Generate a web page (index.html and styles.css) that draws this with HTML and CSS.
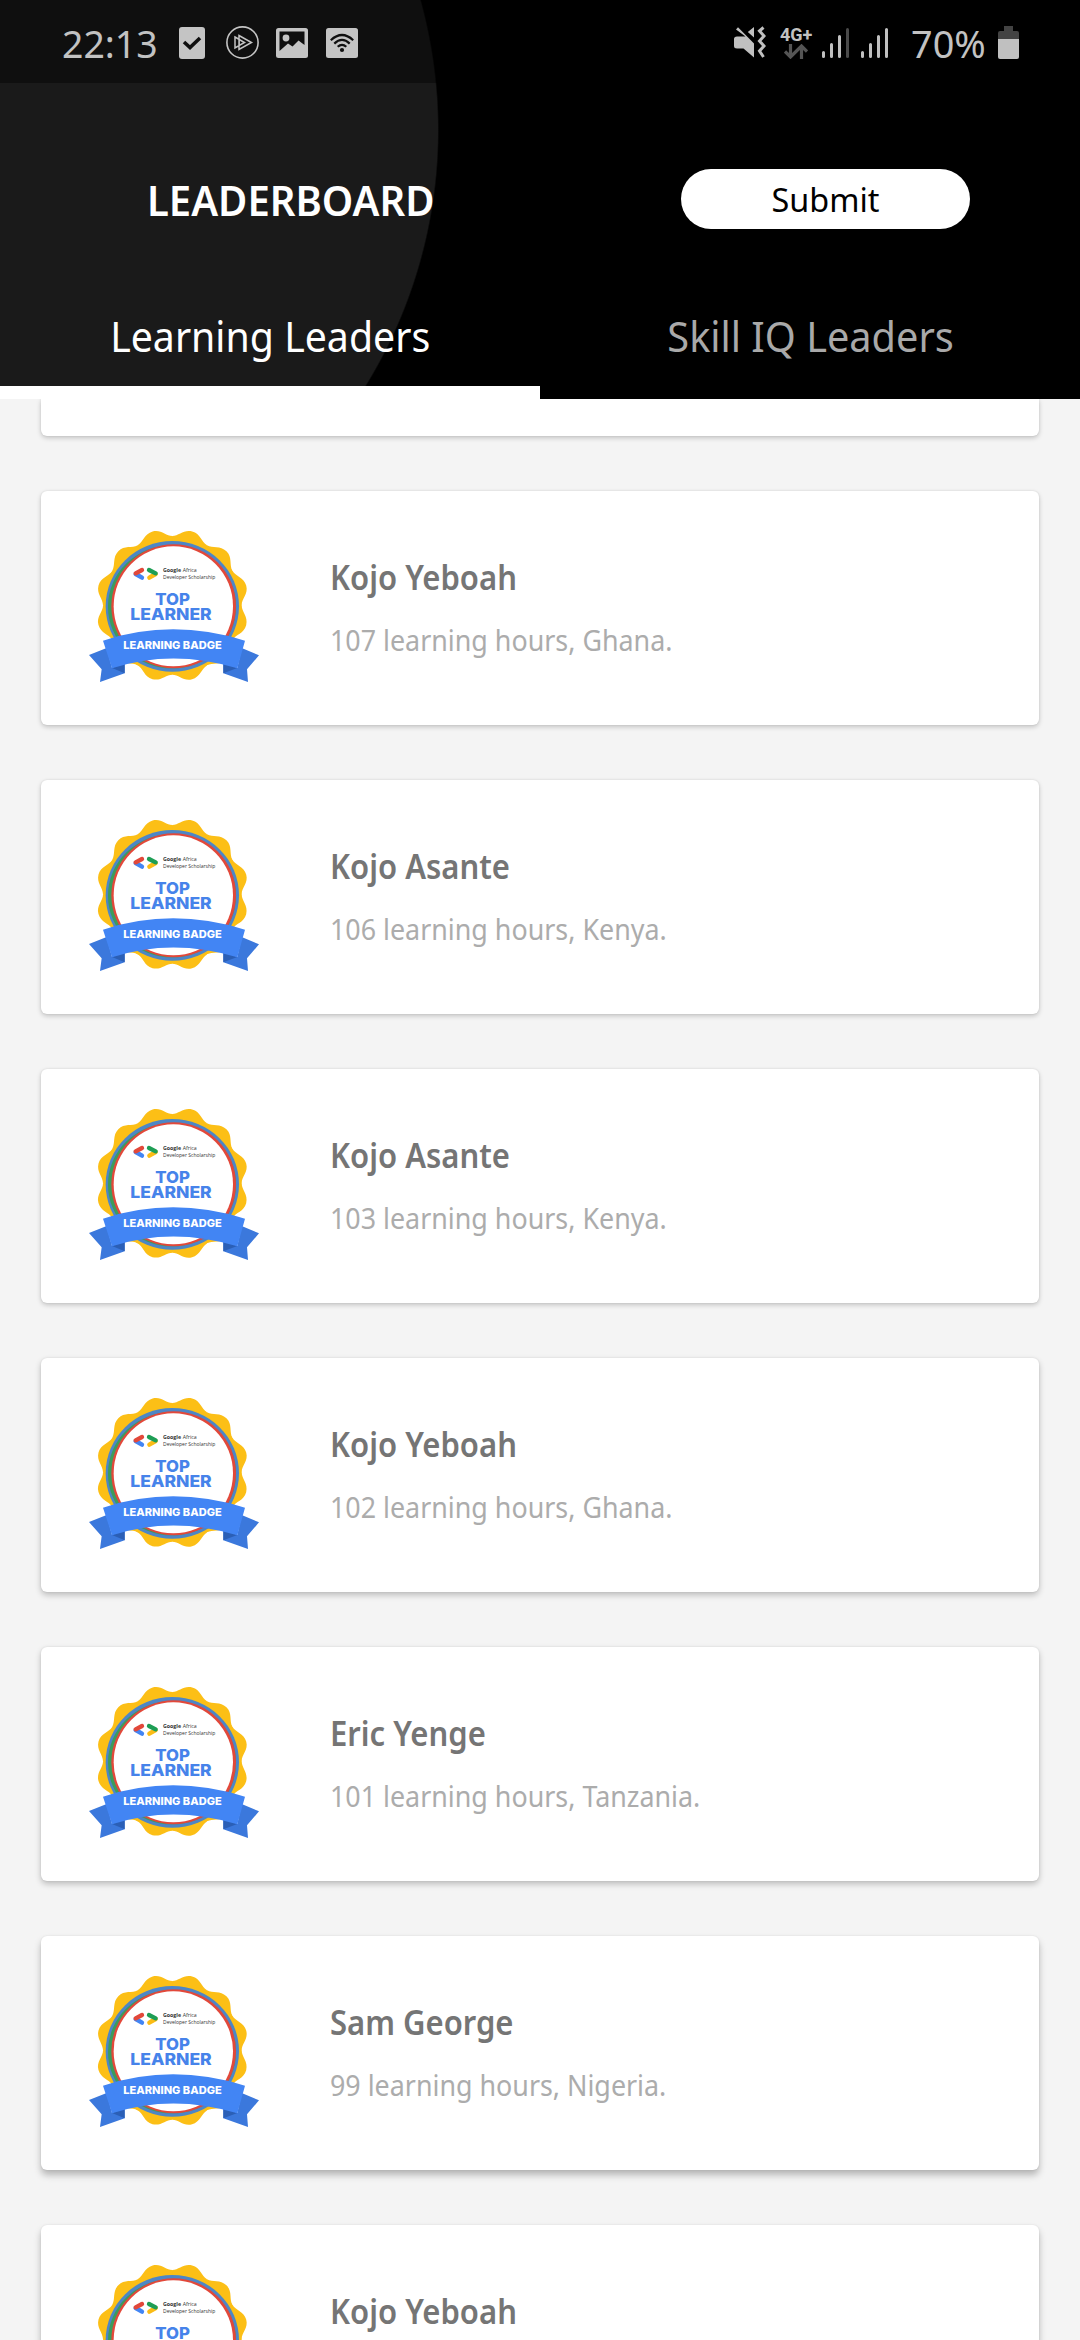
FILE: index.html
```html
<!DOCTYPE html>
<html lang="en">
<head>
<meta charset="utf-8">
<title>Leaderboard</title>
<link rel="stylesheet" href="styles.css">
</head>
<body>
<svg class="defs" aria-hidden="true">
  <defs>
    <path id="scallop" d="M0 0V-208C20 -208 34 -228 59.5 -221.5C85 -215 86.7 -190 104 -180Z"/>
    <symbol id="badge" viewBox="0 0 630 570">
      <g transform="translate(307 286)" fill="#fcbf16">
        <circle r="207"/>
        <use href="#scallop"/>
        <use href="#scallop" transform="rotate(30)"/>
        <use href="#scallop" transform="rotate(60)"/>
        <use href="#scallop" transform="rotate(90)"/>
        <use href="#scallop" transform="rotate(120)"/>
        <use href="#scallop" transform="rotate(150)"/>
        <use href="#scallop" transform="rotate(180)"/>
        <use href="#scallop" transform="rotate(210)"/>
        <use href="#scallop" transform="rotate(240)"/>
        <use href="#scallop" transform="rotate(270)"/>
        <use href="#scallop" transform="rotate(300)"/>
        <use href="#scallop" transform="rotate(330)"/>
      </g>
      <ellipse cx="307" cy="289" rx="200" ry="196" fill="#4d86c6"/>
      <ellipse cx="306" cy="290" rx="192" ry="185" fill="#3c9c5c"/>
      <ellipse cx="311" cy="289" rx="187" ry="186" fill="#e2483a"/>
      <ellipse cx="310" cy="289" rx="179" ry="180" fill="#fff"/>
      <g fill="none" stroke-width="13" stroke-linecap="round">
        <path d="M197 192L216 203" stroke="#4285f4"/>
        <path d="M197 190L216 180" stroke="#e2483a"/>
        <path d="M257 192L238 203" stroke="#fbbc15"/>
        <path d="M237 180L257 190" stroke="#1e9e55"/>
      </g>
      <g class="badge-small">
        <text x="279" y="187" font-weight="700" textLength="54" lengthAdjust="spacingAndGlyphs">Google</text>
        <text x="338" y="187" textLength="42" lengthAdjust="spacingAndGlyphs">Africa</text>
        <text x="279" y="207" textLength="157" lengthAdjust="spacingAndGlyphs">Developer Scholarship</text>
      </g>
      <g class="badge-title">
        <text x="256" y="286" textLength="104" lengthAdjust="spacingAndGlyphs">TOP</text>
        <text x="181" y="330" textLength="244" lengthAdjust="spacingAndGlyphs">LEARNER</text>
      </g>
      <path d="M57 435L110 414L126 474L164 458V490L90 516L95 478Z" fill="#3b78dc"/>
      <path d="M567 436L515 414L502 474L460 458V490L534 516L531 478Z" fill="#3b78dc"/>
      <path d="M126 474L164 457V490ZM502 474L460 457V490Z" fill="#2b5fb6"/>
      <path d="M99 392Q307 324 525 392L502 475Q307 416 126 475Z" fill="#4285f4"/>
      <text class="badge-ribbon" x="160" y="418" textLength="295" lengthAdjust="spacingAndGlyphs">LEARNING BADGE</text>
    </symbol>
  </defs>
</svg>

<header class="header">
  <div class="status">
    <span class="clock"><span class="clock-text">22:13</span></span>
    <svg class="ic-check" width="26" height="32" viewBox="0 0 26 32"><rect width="26" height="32" rx="3" fill="#c4c4c4"/><path d="M5 15L11 20.5L21 11" fill="none" stroke="#0f0f0f" stroke-width="3.6"/></svg>
    <svg class="ic-play" width="33" height="33" viewBox="0 0 33 33" fill="none" stroke="#c4c4c4"><circle cx="16.5" cy="16.5" r="15.6" stroke-width="1.6"/><path d="M13 9.5L25.5 16.5L13 23.5ZM9 11L18.5 16.5L9 22ZM13.2 13.5L18.5 16.5L13.2 19.5Z" stroke-width="1.5"/></svg>
    <svg class="ic-image" width="32" height="30" viewBox="0 0 32 30"><rect width="32" height="30" rx="2.5" fill="#c4c4c4"/><path d="M3.5 3.5H28.5V17L22.5 12.5L16.5 18.5L12 15.5L3.5 23Z" fill="#0f0f0f"/><circle cx="10" cy="10" r="3.4" fill="#c4c4c4"/></svg>
    <svg class="ic-wifi" width="32" height="30" viewBox="0 0 32 30"><rect width="32" height="30" rx="2.5" fill="#c4c4c4"/><g fill="none" stroke="#0f0f0f" stroke-width="2.2"><path d="M4.8 12.2Q16 1.8 27.2 12.2M8.3 15.6Q16 8.2 23.7 15.6M11.7 18.8Q16 14.8 20.3 18.8"/></g><circle cx="16" cy="22" r="2.1" fill="#0f0f0f"/></svg>

    <svg class="ic-mute" width="32" height="33" viewBox="0 0 32 33"><path d="M0 13Q0 10.5 3 10.5H9.5L11.5 10.5L2 3.5L4 1.2L20 17.5V31.5L9.5 22.5H3Q0 22.5 0 20ZM20 1V11.5L13.8 6Z" fill="#c0c0c0"/><path d="M29.5 1.5L25.5 5L30 10L25.5 15L30 20L25.5 25L29.5 31" fill="none" stroke="#c0c0c0" stroke-width="3"/></svg>
    <span class="net"><span class="net-text">4G+</span><svg width="24" height="15" viewBox="0 0 24 15" fill="none" stroke="#555" stroke-width="3.2"><path d="M6.5 0V12M1 7.5L6.5 13L12 7.5M17.5 15V3M12 7.5L17.5 2L23 7.5"/></svg></span>
    <svg class="ic-sig" width="27" height="30" viewBox="0 0 27 30" stroke="#c0c0c0" stroke-width="3" stroke-linecap="round"><path d="M1.5 24.5V28.5M9.5 16.5V28.5M17.5 8.5V28.5"/><path d="M25.5 1.5V28.5" stroke="#4a4a4a"/></svg>
    <svg class="ic-sig2" width="27" height="30" viewBox="0 0 27 30" stroke="#c0c0c0" stroke-width="3" stroke-linecap="round"><path d="M1.5 24.5V28.5M9.5 16.5V28.5M17.5 8.5V28.5M25.5 1.5V28.5"/></svg>
    <span class="percent"><span class="percent-text">70%</span></span>
    <svg class="ic-batt" width="21" height="33" viewBox="0 0 21 33"><path d="M6 0H15V5H19Q21 5 21 7V14H0V7Q0 5 2 5H6Z" fill="#434343"/><path d="M0 13H21V31Q21 33 19 33H2Q0 33 0 31Z" fill="#c0c0c0"/></svg>
  </div>
  <div class="bar">
    <div class="bar-cell"><h1 class="title">LEADERBOARD</h1></div>
    <div class="bar-cell"><button class="submit"><span class="submit-text">Submit</span></button></div>
  </div>
  <nav class="tabs">
    <a class="tab tab-active"><span class="tab-text">Learning Leaders</span></a>
    <a class="tab"><span class="tab-text tab-text-skill">Skill IQ Leaders</span></a>
  </nav>
</header>

<main class="list">
  <article class="card card-cut"></article>
  <article class="card"><svg class="badge"><use href="#badge"/></svg><div class="info"><h2 class="name">Kojo Yeboah</h2><p class="detail">107 learning hours, Ghana.</p></div></article>
  <article class="card"><svg class="badge"><use href="#badge"/></svg><div class="info"><h2 class="name">Kojo Asante</h2><p class="detail">106 learning hours, Kenya.</p></div></article>
  <article class="card"><svg class="badge"><use href="#badge"/></svg><div class="info"><h2 class="name">Kojo Asante</h2><p class="detail">103 learning hours, Kenya.</p></div></article>
  <article class="card mid"><svg class="badge"><use href="#badge"/></svg><div class="info"><h2 class="name">Kojo Yeboah</h2><p class="detail">102 learning hours, Ghana.</p></div></article>
  <article class="card mid"><svg class="badge"><use href="#badge"/></svg><div class="info"><h2 class="name">Eric Yenge</h2><p class="detail">101 learning hours, Tanzania.</p></div></article>
  <article class="card low"><svg class="badge"><use href="#badge"/></svg><div class="info"><h2 class="name">Sam George</h2><p class="detail">99 learning hours, Nigeria.</p></div></article>
  <article class="card low"><svg class="badge"><use href="#badge"/></svg><div class="info"><h2 class="name">Kojo Yeboah</h2></div></article>
</main>
</body>
</html>
```
FILE: styles.css
```css
* { box-sizing: border-box; }

body {
  margin: 0;
  width: 1080px;
  height: 2340px;
  display: flex;
  flex-direction: column;
  overflow: hidden;
  background: #f4f4f4;
  font-family: "Noto Sans", "Open Sans", sans-serif;
}

h1, h2, p { margin: 0; }
svg { display: block; flex: none; }
.defs { position: absolute; width: 0; height: 0; }

.header {
  flex: none;
  height: 399px;
  background: radial-gradient(circle at -49px 130px, #1a1a1a 486.5px, #000 488px);
}

.status {
  display: flex;
  align-items: center;
  height: 83px;
  padding-left: 62px;
  background: rgba(0, 0, 0, 0.42);
  color: #c2c2c2;
  white-space: nowrap;
}
.clock { width: 117px; }
.clock-text, .percent-text { display: block; font-size: 39px; line-height: 83px; transform-origin: left; }
.clock-text { transform: translateY(1px) scaleX(0.96); }
.ic-check { margin: 2px 21px 0 0; }
.ic-play { margin: 2px 17px 0 0; }
.ic-image { margin: 2px 18px 0 0; }
.ic-wifi { margin: 2px 376px 0 0; }
.ic-mute { margin: 2px 14px 0 0; }
.net { width: 42px; display: flex; flex-direction: column; margin-top: 4px; }
.net svg { margin: 2px 0 0 4px; }
.net-text { font: 700 18px/14px Roboto, sans-serif; }
.ic-sig { margin: 2px 12px 0 0; }
.ic-sig2 { margin: 2px 23px 0 0; }
.percent { width: 87px; }
.percent-text { transform: translateY(1px) scaleX(0.97); }
.ic-batt { margin-top: 2px; }

.bar { display: flex; height: 202px; }
.bar-cell { flex: 1; display: flex; }
.title {
  margin: 87px 0 0 147px;
  color: #fff;
  font-size: 42px;
  font-weight: 600;
  line-height: 60px;
  transform: scaleX(0.953);
  transform-origin: left;
}
.submit {
  width: 289px;
  height: 60px;
  margin: 86px 0 0 141px;
  padding: 0;
  border: 0;
  border-radius: 30px;
  background: #fff;
  color: #000;
  font: 400 33px/62px "Noto Sans", sans-serif;
}
.submit-text { display: block; transform: scaleX(0.98); }

.tabs { display: flex; height: 114px; }
.tab {
  flex: 1;
  display: flex;
  justify-content: center;
  color: #a9a9a9;
  font-size: 42px;
  line-height: 60px;
  padding-top: 21px;
  white-space: nowrap;
}
.tab-active { color: #fff; border-bottom: 13px solid #fff; }
.tab-text { transform: scaleX(0.935); }
.tab-text-skill { transform: translateX(1px) scaleX(0.945); }

.list {
  flex: 1;
  min-height: 0;
  display: flex;
  flex-direction: column;
  gap: 55px;
  padding: 0 41px;
  overflow: hidden;
}
.card {
  flex: none;
  display: flex;
  height: 234px;
  padding: 19px 0 0 29px;
  border-radius: 6px;
  background: #fff;
  box-shadow: 0 2px 5px rgba(0, 0, 0, 0.2), 0 0 2px rgba(0, 0, 0, 0.1);
}
.card-cut { height: 37px; border-radius: 0 0 6px 6px; }
.mid { box-shadow: 0 3px 6px rgba(0, 0, 0, 0.23), 0 0 2px rgba(0, 0, 0, 0.1); }
.low { box-shadow: 0 5px 7px rgba(0, 0, 0, 0.26), 0 0 2px rgba(0, 0, 0, 0.1); }

.badge { width: 210px; height: 190px; }
.info {
  display: flex;
  flex-direction: column;
  gap: 23px;
  margin: 47px 0 0 50px;
  white-space: nowrap;
}
.name {
  color: #757575;
  font-size: 34px;
  font-weight: 600;
  line-height: 40px;
  transform: scaleX(0.912);
  transform-origin: left;
}
.detail {
  color: #acacac;
  font-size: 29.5px;
  line-height: 40px;
  transform: scaleX(0.91);
  transform-origin: left;
}

.badge-small { font: 400 18px "Open Sans", sans-serif; fill: #333; }
.badge-title { font: 800 49px Inter, sans-serif; fill: #4683ea; }
.badge-ribbon { font: 800 32px Inter, sans-serif; fill: #fff; }
```
